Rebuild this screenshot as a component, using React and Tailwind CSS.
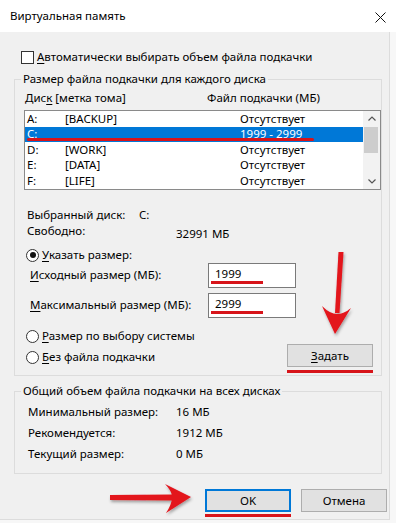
import React from 'react';

const font = { fontFamily: '"Noto Sans", "Open Sans", sans-serif' };

function U({ children }) {
  return <span className="underline underline-offset-2">{children}</span>;
}

function Radio({ checked }) {
  return (
    <span className="grid h-[13px] w-[13px] place-items-center rounded-full border border-[#333] bg-white">
      {checked && <span className="h-[6px] w-[6px] rounded-full bg-[#111]" />}
    </span>
  );
}

function Field({ value }) {
  return (
    <div className="relative h-[25px] w-[88px] border border-[#7a7a7a] bg-white pl-[6px] leading-[20px]">
      {value}
      <span className="absolute left-[2px] top-[17px] h-[3px] w-[52px] bg-[#d7141a]" />
    </div>
  );
}

const drives = [
  ['A:', '[BACKUP]', 'Отсутствует'],
  ['C:', '', '1999 - 2999'],
  ['D:', '[WORK]', 'Отсутствует'],
  ['E:', '[DATA]', 'Отсутствует'],
  ['F:', '[LIFE]', 'Отсутствует']
];

export default function App() {
  return (
    <div className="relative h-[523px] w-[396px] overflow-hidden bg-[#f7f7f7] text-[11.5px] leading-[16px] text-black" style={font}>
      <div className="flex h-[32px] items-center justify-between bg-white pl-[10px] pr-[10px]">
        <span>Виртуальная память</span>
        <svg width="11" height="11" viewBox="0 0 11 11" className="mt-[2px]">
          <path d="M0.5 0.5 L10.5 10.5 M10.5 0.5 L0.5 10.5" stroke="#111" strokeWidth="1" fill="none" />
        </svg>
      </div>

      <div className="h-[488px] w-[390px] border-r border-b border-[#dcdcdc] bg-[#f0f0f0]">
        <div className="w-[382px] pl-[14px]">
          <div className="flex items-center gap-[3px] pl-[7px] pt-[17px]">
            <span className="h-[13px] w-[13px] border border-[#333] bg-white" />
            <span>
              <U>А</U>втоматически выбирать объем файла подкачки
            </span>
          </div>

          <fieldset className="mt-[6px] border border-[#dcdcdc] pb-[8px] pl-[9px]">
            <legend className="-ml-[3px] px-[2px]">Размер файла подкачки для каждого диска</legend>
            <div className="mt-[3px] flex pl-[1px]">
              <span className="w-[182px]">
                Дис<U>к</U> [метка тома]
              </span>
              <span>Файл подкачки (МБ)</span>
            </div>

            <div className="relative mt-[4px] flex h-[80px] border border-[#8a8a8a] bg-white">
              <div className="flex-1">
                {drives.map(([d, label, size], i) => (
                  <div
                    key={d}
                    className={
                      'flex h-[15.5px] items-center pl-[2px] ' +
                      (i === 1 ? 'bg-[#0078d7] text-white' : '')
                    }
                  >
                    <span className="w-[38px]">{d}</span>
                    <span className="w-[175px]">{label}</span>
                    <span>{size}</span>
                  </div>
                ))}
              </div>
              <div className="flex w-[17px] flex-col items-center justify-between bg-[#f2f2f2] py-[5px]">
                <svg width="8" height="5" viewBox="0 0 8 5">
                  <path d="M0.5 4.5 L4 1 L7.5 4.5" stroke="#555" strokeWidth="1.2" fill="none" />
                </svg>
                <svg width="8" height="5" viewBox="0 0 8 5">
                  <path d="M0.5 0.5 L4 4 L7.5 0.5" stroke="#555" strokeWidth="1.2" fill="none" />
                </svg>
              </div>
              <span className="absolute right-[2px] top-[16px] h-[26px] w-[14px] bg-[#cdcdcd]" />
              <span className="absolute left-[2px] top-[27px] h-[3px] w-[287px] rounded-full bg-[#d7141a]" />
            </div>

            <div className="mt-[17px] flex pl-[3px]">
              <span className="w-[112px]">Выбранный диск:</span>
              <span>C:</span>
            </div>
            <div className="flex h-[16px] pl-[3px]">
              <span className="w-[149px]">Свободно:</span>
              <span className="mt-[3px]">32991 МБ</span>
            </div>

            <div className="mt-[8px] flex items-center gap-[3px] pl-[2px]">
              <Radio checked />
              <span>
                <U>У</U>казать размер:
              </span>
            </div>

            <div className="flex h-[25px] items-center pl-[6px]">
              <span className="mb-[2px] w-[178px]">
                <U>И</U>сходный размер (МБ):
              </span>
              <Field value="1999" />
            </div>
            <div className="mt-[5px] flex h-[25px] items-center pl-[6px]">
              <span className="mb-[2px] w-[178px]">
                <U>М</U>аксимальный размер (МБ):
              </span>
              <Field value="2999" />
            </div>

            <div className="mt-[10px] flex items-end justify-between pr-[8px]">
              <div className="flex flex-col gap-[5px] pb-[2px] pl-[2px]">
                <div className="flex items-center gap-[3px]">
                  <Radio />
                  <span>
                    <U>Р</U>азмер по выбору системы
                  </span>
                </div>
                <div className="flex items-center gap-[3px]">
                  <Radio />
                  <span>
                    <U>Б</U>ез файла подкачки
                  </span>
                </div>
              </div>
              <div className="relative">
                <button className="h-[23px] w-[86px] border border-[#adadad] bg-[#e1e1e1]">
                  <U>З</U>адать
                </button>
                <span className="absolute left-0 top-[26px] h-[3px] w-[86px] bg-[#d7141a]" />
              </div>
            </div>
          </fieldset>

          <fieldset className="mt-[7px] border border-[#dcdcdc] pb-[9px] pl-[13px]">
            <legend className="-ml-[7px] px-[2px]">Общий объем файла подкачки на всех дисках</legend>
            <div className="mt-[2px]">
              {[
                ['Минимальный размер:', '16 МБ'],
                ['Рекомендуется:', '1912 МБ'],
                ['Текущий размер:', '0 МБ']
              ].map(([k, v]) => (
                <div key={k} className="flex h-[21px] items-center">
                  <span className="w-[148px]">{k}</span>
                  <span>{v}</span>
                </div>
              ))}
            </div>
          </fieldset>
        </div>

        <div className="mt-[15px] flex gap-[10px] pl-[205px]">
          <div className="relative">
            <button className="h-[23px] w-[86px] border-2 border-[#0078d7] bg-[#e1e1e1]">OK</button>
            <span className="absolute left-0 top-[25px] h-[3px] w-[86px] bg-[#d7141a]" />
          </div>
          <button className="h-[23px] w-[86px] border border-[#adadad] bg-[#e1e1e1]">Отмена</button>
        </div>
      </div>

      <svg className="pointer-events-none absolute inset-0" width="396" height="523" viewBox="0 0 396 523">
        <defs>
          <filter id="sh" x="-20%" y="-20%" width="140%" height="140%">
            <feDropShadow dx="1" dy="2" stdDeviation="1.5" floodColor="#000" floodOpacity="0.35" />
          </filter>
        </defs>
        <g fill="#e3141c" filter="url(#sh)">
          <path d="M338.5 252 L343.5 252 L339.5 313 L335 313 Z" />
          <path d="M322 306 Q330 314 337 314 Q344 314 351 308 L335 334 Z" />
          <path d="M110 495 L172 494.5 L172 500.5 L110 500 Z" />
          <path d="M165 484 Q172 491 172 497 Q172 504 166 513 L191 497 Z" />
        </g>
      </svg>
    </div>
  );
}
